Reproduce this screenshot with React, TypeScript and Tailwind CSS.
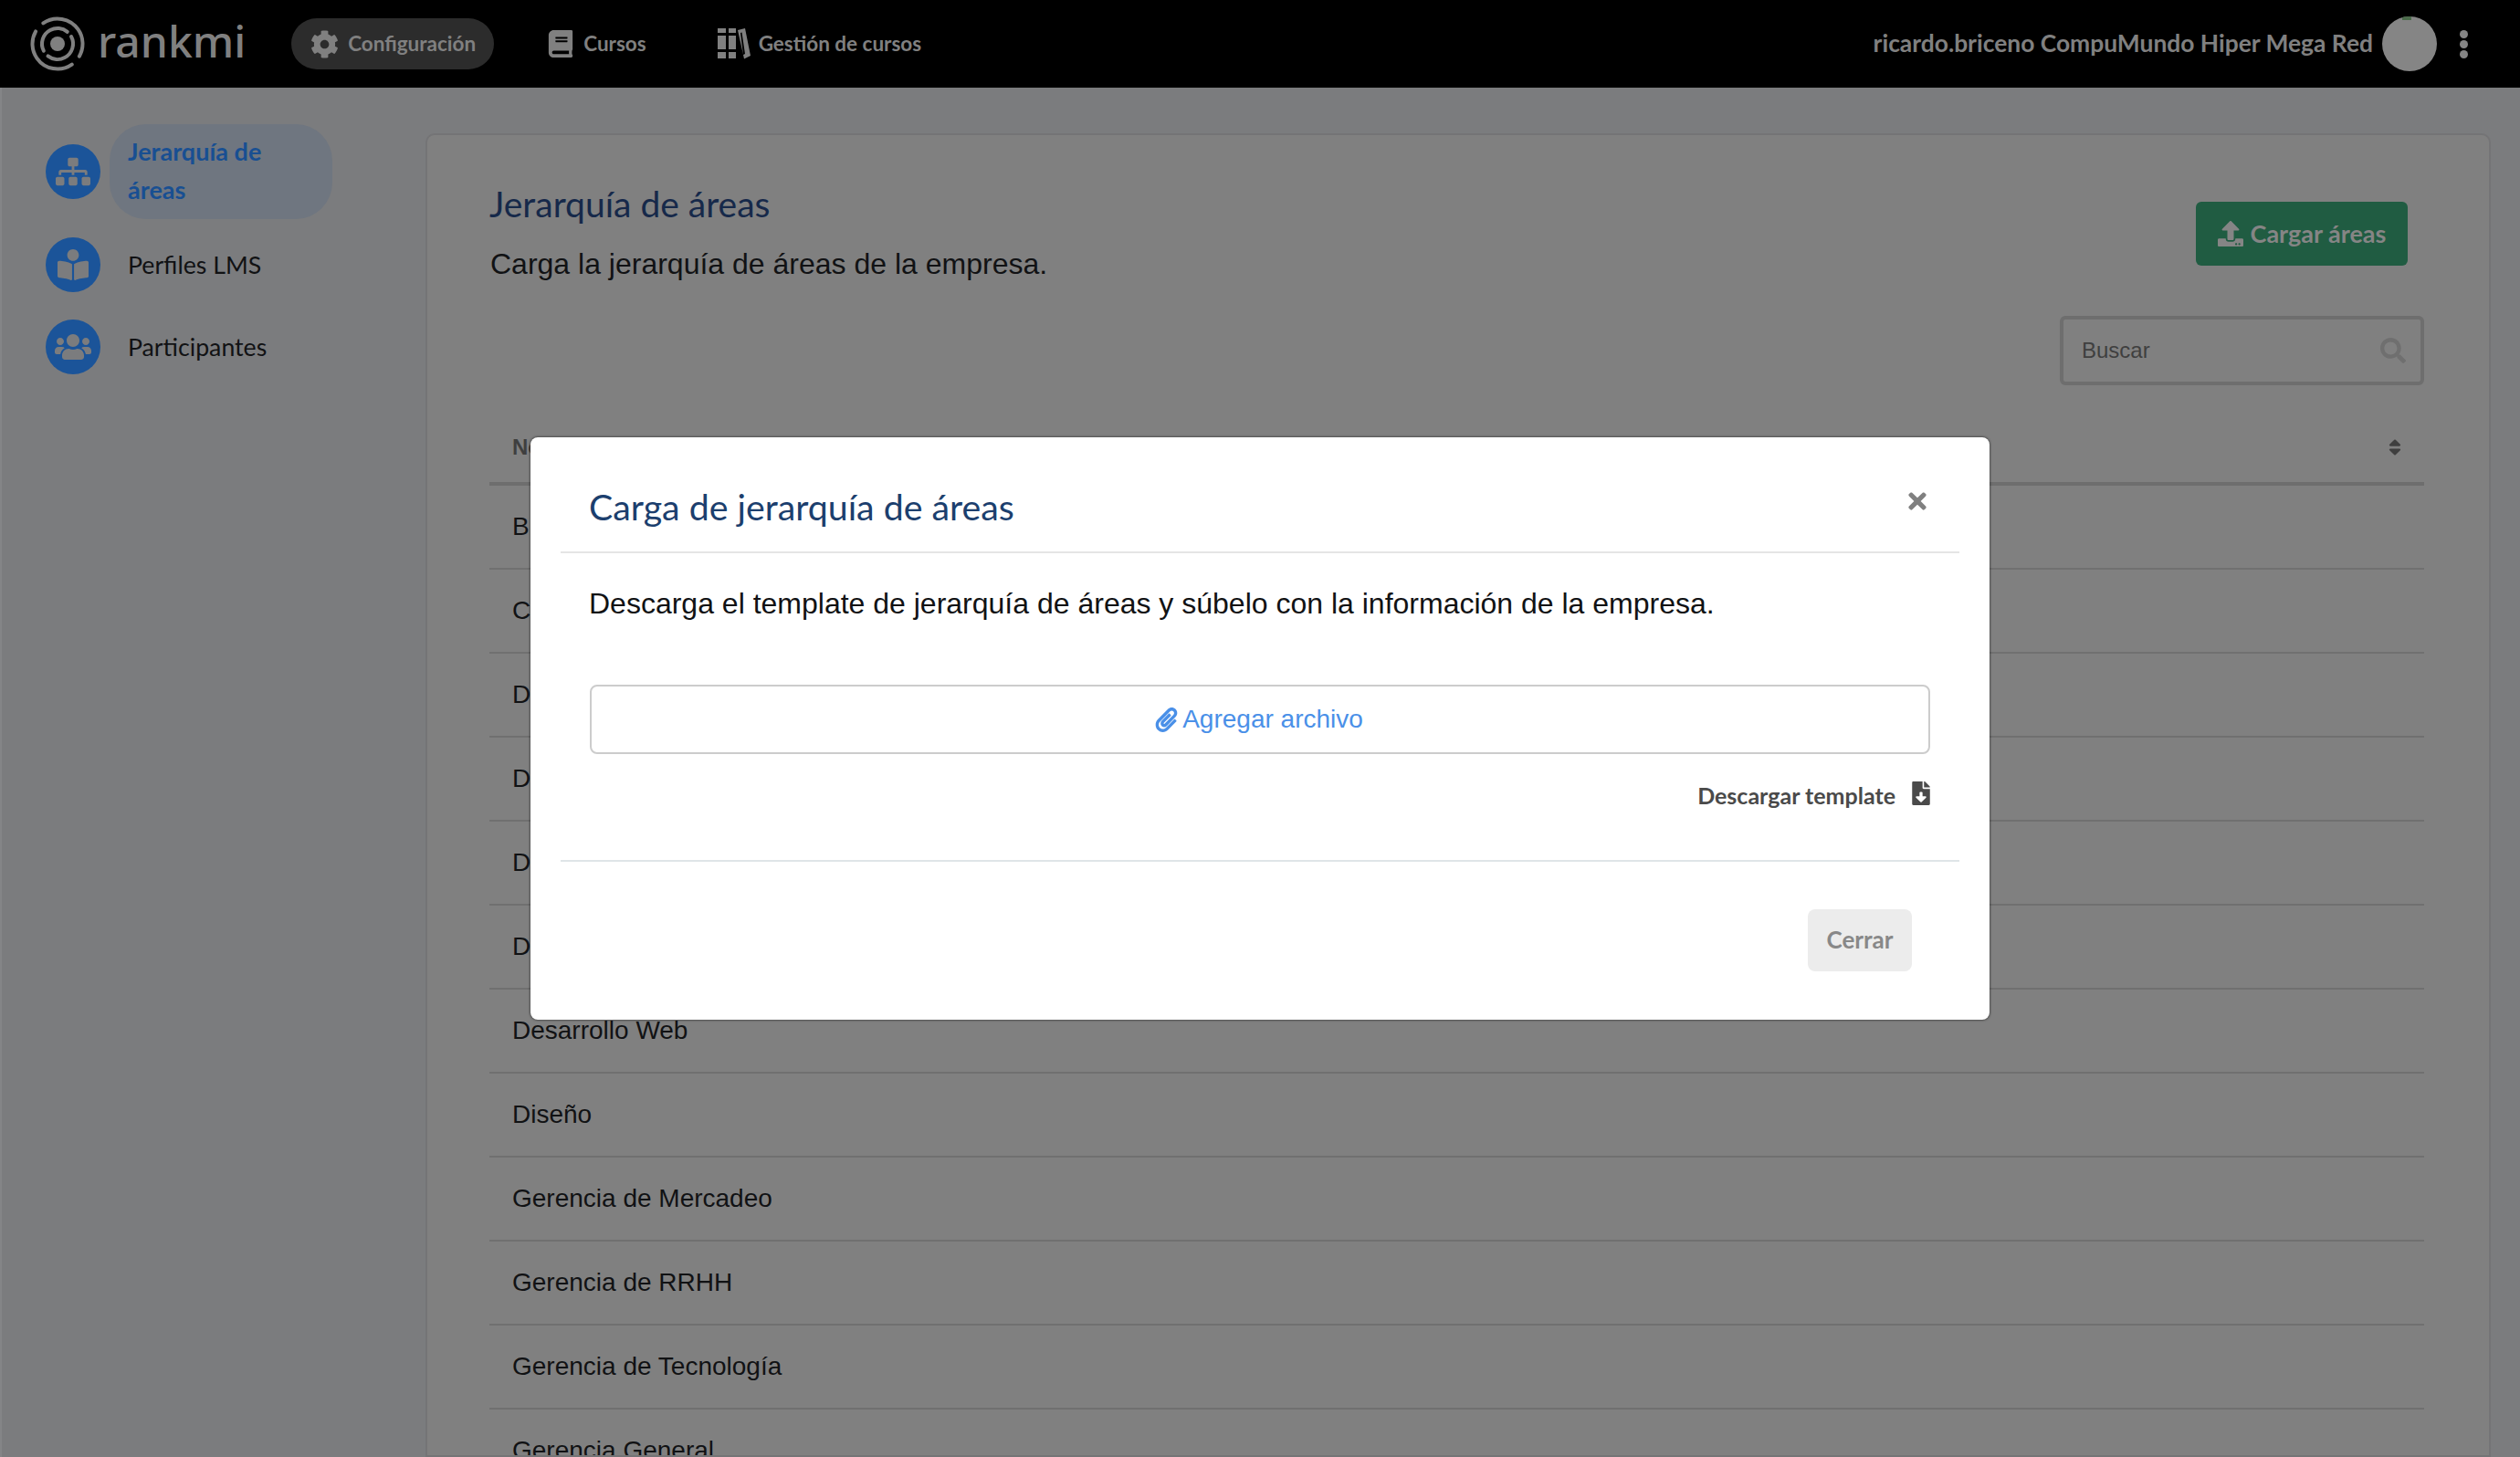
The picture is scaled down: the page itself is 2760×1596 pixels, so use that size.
import React from "react";
import { FaCog, FaBook, FaSitemap, FaBookReader, FaUsers, FaUpload, FaSearch, FaSort, FaTimes, FaPaperclip, FaFileDownload } from "react-icons/fa";

const rows = ["Bienestar", "Comercial", "Desarrollo", "Desarrollo de Negocios", "Desarrollo Móvil", "Desarrollo de Producto", "Desarrollo Web", "Diseño", "Gerencia de Mercadeo", "Gerencia de RRHH", "Gerencia de Tecnología", "Gerencia General"];

function Logo() {
  return (
    <svg width="60" height="60" viewBox="0 0 60 60" fill="none" stroke="#808080" strokeWidth="4" strokeLinecap="round">
      <circle cx="30" cy="30" r="8" fill="#808080" stroke="none" />
      <circle cx="30" cy="30" r="17" strokeDasharray="46 7.4" transform="rotate(-28 30 30)" />
      <circle cx="30" cy="30" r="27.5" strokeDasharray="74 12.4" transform="rotate(55 30 30)" />
    </svg>
  );
}

function Books() {
  return (
    <svg width="36" height="34" viewBox="0 0 36 34" fill="#808080">
      <path d="M0 0h9v5H0zM0 8h9v15H0zM0 26h9v7H0zM12 0h8v5h-8zM12 8h8v15h-8zM12 26h8v7h-8z" />
      <path d="M22 2l8-2 6 30-7 3.5zM25 5l3 24 2-1-3.500-23.500z" fillRule="evenodd" />
    </svg>
  );
}

function SideItem({ icon, label, active }: { icon: React.ReactNode; label: string; active?: boolean }) {
  return (
    <div className="flex items-center">
      <div className="flex h-[60px] w-[60px] shrink-0 items-center justify-center rounded-full bg-[#1b5499] text-[#7b7c7e]">{icon}</div>
      {active ? (
        <div className="ml-[10px] w-[244px] rounded-[40px] bg-[#6f7680] py-[9px] pb-[11px] pl-[20px] pr-[40px] text-[27px] font-bold leading-[42px] text-[#184f92]">{label}</div>
      ) : (
        <div className="ml-[30px] text-[26.700px] leading-[42px] text-[#111214]">{label}</div>
      )}
    </div>
  );
}

export default function App() {
  return (
    <div className="relative flex h-[1596px] w-[2760px] flex-col overflow-hidden bg-[#7b7c7e] font-['Lato','Noto_Sans',sans-serif]">
      <header className="flex h-[96px] shrink-0 items-center justify-between bg-black text-[#808080]">
        <div className="flex items-center">
          <div className="ml-[33px]"><Logo /></div>
          <span className="ml-[14px] mt-[-6px] font-['Noto_Sans',sans-serif] text-[48px] font-medium leading-none">rankmi</span>
          <div className="ml-[50px] flex h-[56px] w-[222px] items-center rounded-[28px] bg-[#2c2c2c] pl-[21px]">
            <FaCog size={31} />
            <span className="ml-[10px] text-[22.500px] font-bold">Configuración</span>
          </div>
          <div className="ml-[58px] flex items-center">
            <FaBook size={30} />
            <span className="ml-[10px] text-[22.500px] font-bold">Cursos</span>
          </div>
          <div className="ml-[78px] flex items-center">
            <Books />
            <span className="ml-[9px] text-[22.500px] font-bold">Gestión de cursos</span>
          </div>
        </div>
        <div className="flex items-center">
          <span className="text-[26.400px] font-bold">ricardo.briceno CompuMundo Hiper Mega Red</span>
          <div className="relative ml-[10px] h-[60px] w-[60px] overflow-hidden rounded-full bg-[#858585]">
            <span className="absolute left-[22px] top-0 h-[4px] w-[10px] bg-[#4a6b4a]" />
          </div>
          <div className="ml-[25px] mr-[57px] flex flex-col gap-[2px]">
            <span className="h-[9px] w-[9px] rounded-full bg-[#858585]" />
            <span className="h-[9px] w-[9px] rounded-full bg-[#858585]" />
            <span className="h-[9px] w-[9px] rounded-full bg-[#858585]" />
          </div>
        </div>
      </header>

      <div className="flex min-h-0 flex-1">
        <aside className="w-[466px] shrink-0 border-l-2 border-[#848587] pl-[48px] pt-[40px]">
          <SideItem active label="Jerarquía de áreas" icon={<FaSitemap size={38} />} />
          <div className="mt-[20px]"><SideItem label="Perfiles LMS" icon={<FaBookReader size={34} />} /></div>
          <div className="mt-[30px]"><SideItem label="Participantes" icon={<FaUsers size={40} />} /></div>
        </aside>

        <main className="mr-[32px] mt-[50px] flex-1 overflow-hidden rounded-t-[10px] border-2 border-[#747476] bg-[#808080] pl-[68px] pr-[71px] font-['Liberation_Sans',sans-serif]">
          <div className="flex justify-between">
            <div className="pt-[50px]">
              <h1 className="font-['Lato',sans-serif] text-[39px] leading-[50px] text-[#16294a]">Jerarquía de áreas</h1>
              <p className="ml-[1px] mt-[17px] text-[32px] leading-[48px] text-[#111214]">Carga la jerarquía de áreas de la empresa.</p>
            </div>
            <button className="mr-[18px] mt-[73px] flex h-[70px] w-[232px] items-center justify-center gap-[8px] rounded-[6px] bg-[#205c42] font-['Lato',sans-serif] text-[27px] font-bold text-[#858585]">
              <FaUpload size={28} />
              Cargar áreas
            </button>
          </div>
          <div className="mt-[33px] flex justify-end">
            <div className="flex h-[76px] w-[399px] items-center justify-between rounded-[6px] border-4 border-[#6e6e6e] pl-[20px] pr-[16px]">
              <span className="text-[24px] text-[#3f3f3f]">Buscar</span>
              <FaSearch size={28} className="text-[#6f6f6f]" />
            </div>
          </div>
          <div className="flex h-[110px] items-center justify-between border-b-4 border-[#6e6e6e] pl-[25px] pr-[21px] pt-[30px]">
            <span className="text-[24px] font-bold text-[#3f3f3f]">Nombre</span>
            <FaSort size={22} className="text-[#3f3f3f]" />
          </div>
          {rows.map((r) => (
            <div key={r} className="flex h-[92px] shrink-0 items-center border-b-2 border-[#707070] pl-[25px] text-[28px] text-[#111214]">{r}</div>
          ))}
        </main>
      </div>

      <div className="absolute inset-0 flex justify-center">
        <div className="mt-[479px] h-[638px] w-[1598px] rounded-[8px] bg-white px-[33px] shadow-[0_0_3px_rgba(0,0,0,0.8)]">
          <div className="flex h-[127px] items-center justify-between border-b-2 border-[#e5e5e5] pl-[31px] pr-[32px]">
            <h2 className="mt-[28px] font-['Lato',sans-serif] text-[39.300px] text-[#1c3f6e]">Carga de jerarquía de áreas</h2>
            <FaTimes size={28} className="mt-[14px] text-[#808080]" />
          </div>
          <div className="border-b-2 border-[#dfe5e8] px-[32px] font-['Liberation_Sans',sans-serif]">
            <p className="-ml-[1px] pt-[34px] text-[32px] leading-[42px] text-[#111214]">Descarga el template de jerarquía de áreas y súbelo con la información de la empresa.</p>
            <div className="mt-[68px] flex h-[76px] items-center justify-center rounded-[8px] border-2 border-[#cccccc] pr-[3px] text-[28px] text-[#4a90e8]">
              <FaPaperclip size={27} className="mr-[4px]" />
              Agregar archivo
            </div>
            <div className="flex h-[116px] items-start justify-end pt-[27px] font-['Lato',sans-serif] text-[25px] font-bold text-[#4a4a4a]">
              Descargar template
              <FaFileDownload size={26} className="-mr-[3px] ml-[15px] mt-[3px]" />
            </div>
          </div>
          <div className="flex justify-end pr-[52px] pt-[52px]">
            <button className="h-[68px] w-[114px] rounded-[8px] bg-[#ececec] pb-[2px] font-['Lato',sans-serif] text-[26px] font-bold text-[#888888]">Cerrar</button>
          </div>
        </div>
      </div>
    </div>
  );
}
